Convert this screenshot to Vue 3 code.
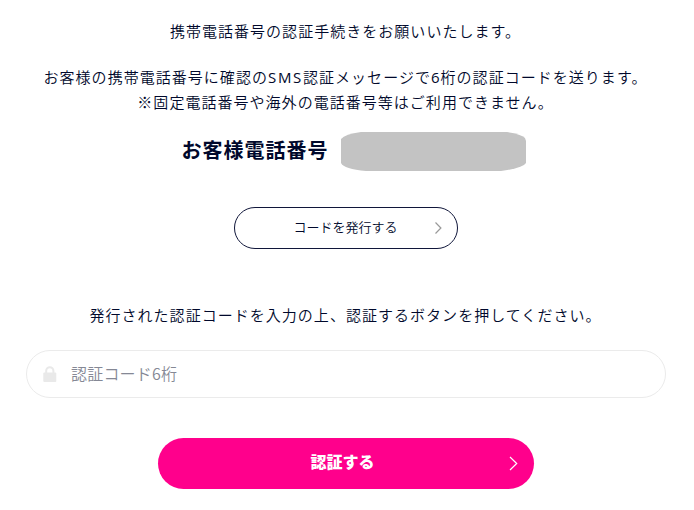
<script setup>
</script>

<template>
  <main class="page">
    <p class="lead">携帯電話番号の認証手続きをお願いいたします。</p>
    <p class="info"><span>お客様の携帯電話番号に確認の<span class="latin">SMS</span>認証メッセージで<span class="digit">6</span>桁の認証コードを送ります。</span><span>※固定電話番号や海外の電話番号等はご利用できません。</span></p>
    <div class="phone"><strong>お客様電話番号</strong>
      <svg class="mask" viewBox="0 0 185 39"><path d="M20 0H166Q180 2 184 6L185 9V31Q182 36 160 39H25Q3 37 0 31V7Q4 2 20 0Z" fill="#c3c3c3" /></svg>
    </div>
    <button class="issue" type="button"><span>コードを発行する</span>
      <svg class="chev" viewBox="0 0 8 14"><path d="M1.5 1.5L6.9 7L1.5 12.5" /></svg>
    </button>
    <p class="hint">発行された認証コードを入力の上、認証するボタンを押してください。</p>
    <label class="field">
      <svg class="lock" viewBox="0 0 14 16"><path d="M3.2 8V4.8a3.6 3.6 0 0 1 7.2 0V8" fill="none" stroke="#e9e9e9" stroke-width="2" /><rect x="0.3" y="6.5" width="13" height="9.5" rx="1" fill="#e9e9e9" /></svg>
      <input type="text" placeholder="認証コード6桁" />
    </label>
    <button class="submit" type="button"><span>認証する</span>
      <svg class="chev" viewBox="0 0 9 15"><path d="M1 1L7.7 7.5L1 14" /></svg>
    </button>
  </main>
</template>

<style>
body { background: #fff; }
</style>
<style scoped>
.page { box-sizing: border-box; width: 694px; height: 510px; padding: 19px 28px 0 26px; display: flex; flex-direction: column; align-items: center; font-family: "Open Sans", "Noto Sans CJK JP", sans-serif; font-weight: 350; color: #00082b; overflow: hidden; }
p { margin: 0 1px 0 0; font-size: 15px; line-height: 25px; letter-spacing: 1.03px; white-space: nowrap; }
.info { margin-top: 21px; display: flex; flex-direction: column; align-items: center; }
.latin { font-weight: 400; letter-spacing: 1.7px; }
.digit { font-weight: 400; }
.phone { margin-top: 17px; height: 39px; display: flex; align-items: center; gap: 12px; margin-left: 15px; }
.phone strong { font-size: 20px; line-height: 30px; letter-spacing: 1px; padding-bottom: 1px; }
.mask { width: 185px; height: 39px; }
button { box-sizing: border-box; font-family: inherit; font-weight: inherit; display: grid; grid-template-columns: 1fr auto 1fr; align-items: center; padding: 0; color: inherit; }
button span { grid-column: 2; }
.chev { width: 8px; height: 14px; justify-self: end; fill: none; stroke: #999; stroke-width: 1.2; }
.issue { margin-top: 36px; width: 224px; height: 42px; border: 1px solid #10163a; border-radius: 21px; background: #fff; font-size: 13px; }
.issue span { padding: 0 1px 3px 0; }
.issue .chev { margin-right: 15px; }
.hint { margin-top: 54px; }
.field { box-sizing: border-box; margin-top: 22px; width: 640px; height: 48px; border: 1px solid #ebebeb; border-radius: 24px; display: flex; align-items: center; padding-left: 16px; gap: 14px; }
.lock { width: 14px; height: 16px; }
input { border: 0; outline: 0; padding: 0 0 2px; flex: 1; font: inherit; font-family: "Noto Sans CJK JP", sans-serif; font-size: 16px; letter-spacing: .2px; height: 28px; background: none; }
input::placeholder { color: #858895; opacity: 1; }
.submit { margin-top: 40px; width: 376px; height: 51px; border: 0; border-radius: 26px; background: #ff008c; color: #fff; font-size: 16px; }
.submit span { padding: 0 7px 5px 0; font-weight: 900; }
.submit .chev { width: 9px; height: 15px; stroke: #fff; margin: 0 16px 1px 0; }
</style>
